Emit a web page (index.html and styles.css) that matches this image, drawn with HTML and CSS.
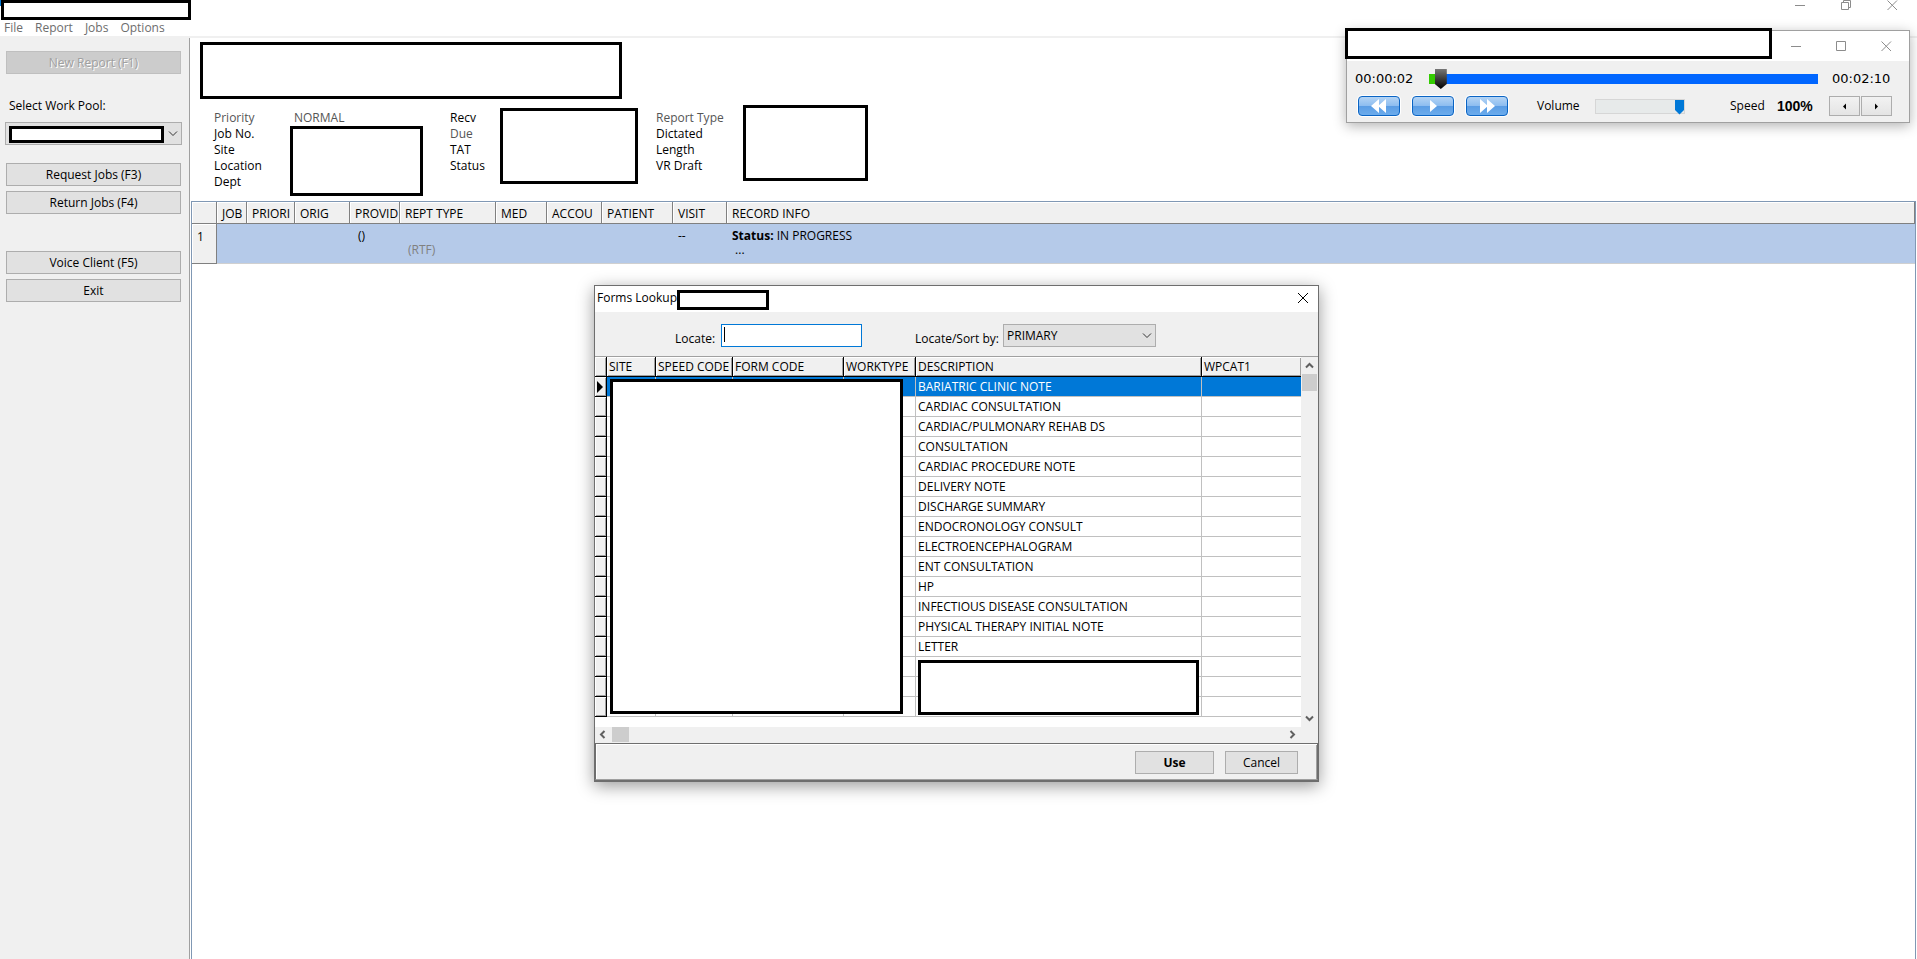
FILE: index.html
```html
<!DOCTYPE html>
<html lang="en">
<head>
<meta charset="utf-8">
<title>Transcription Client</title>
<link rel="stylesheet" href="styles.css">
</head>
<body>
<div class="app">
  <header class="titlebar">
    <div class="title-left">
      <div class="masked app-title"></div>
      <nav class="menu">
        <button type="button">File</button>
        <button type="button">Report</button>
        <button type="button">Jobs</button>
        <button type="button">Options</button>
      </nav>
    </div>
    <div class="win-controls main-controls">
      <button type="button" aria-label="Minimize"><svg width="11" height="11" viewBox="0 0 11 11"><path d="M0 5.5h10"/></svg></button>
      <button type="button" aria-label="Restore"><svg width="11" height="11" viewBox="0 0 11 11"><path d="M.5 2.5h7v7h-7zM2.5 2.5v-2h7v7h-2"/></svg></button>
      <button type="button" aria-label="Close"><svg width="11" height="11" viewBox="0 0 11 11"><path d="M.5.5l9.5 9.5M10 .5L.5 10"/></svg></button>
    </div>
  </header>

  <div class="workspace">
    <aside class="sidebar">
      <button type="button" class="btn new-report" disabled>New Report (F1)</button>
      <label class="pool-label" for="pool">Select Work Pool:</label>
      <div class="pool-wrap">
        <select id="pool" class="combo"><option></option></select>
        <div class="masked pool-mask"></div>
      </div>
      <button type="button" class="btn">Request Jobs (F3)</button>
      <button type="button" class="btn return-jobs">Return Jobs (F4)</button>
      <button type="button" class="btn">Voice Client (F5)</button>
      <button type="button" class="btn">Exit</button>
    </aside>

    <main class="main">
      <section class="job-head">
        <div class="masked banner"></div>
        <div class="fields">
          <ul class="labels first">
            <li class="dim">Priority</li><li>Job No.</li><li>Site</li><li>Location</li><li>Dept</li>
          </ul>
          <div class="first-values"><span class="dim">NORMAL</span><div class="masked job-mask"></div></div>
          <ul class="labels second">
            <li>Recv</li><li class="dim">Due</li><li>TAT</li><li>Status</li>
          </ul>
          <div class="masked recv-mask"></div>
          <ul class="labels third">
            <li class="dim">Report Type</li><li>Dictated</li><li>Length</li><li>VR Draft</li>
          </ul>
          <div class="masked type-mask"></div>
        </div>
      </section>
      <section class="jobs">
        <table class="jobs-table">
          <colgroup><col class="j0"><col class="j1"><col class="j2"><col class="j3"><col class="j4"><col class="j5"><col class="j6"><col class="j7"><col class="j8"><col class="j9"><col></colgroup>
          <thead><tr><th></th><th>JOB</th><th>PRIORI</th><th>ORIG</th><th>PROVID</th><th>REPT TYPE</th><th>MED</th><th>ACCOU</th><th>PATIENT</th><th>VISIT</th><th>RECORD INFO</th></tr></thead>
          <tbody><tr><th>1</th><td></td><td></td><td></td><td class="provider">()</td><td class="rtf"><br>(RTF)</td><td></td><td></td><td></td><td>--</td><td><b>Status:</b> IN PROGRESS<br>&nbsp;...</td></tr></tbody>
        </table>
      </section>
    </main>
  </div>

  <section class="player" aria-label="Player">
    <div class="masked player-mask"></div>
    <div class="win-controls player-controls">
      <button type="button" aria-label="Minimize"><svg width="11" height="11" viewBox="0 0 11 11"><path d="M0 5.5h10"/></svg></button>
      <button type="button" aria-label="Maximize"><svg width="11" height="11" viewBox="0 0 11 11"><path d="M.5.5h9v9h-9z"/></svg></button>
      <button type="button" aria-label="Close"><svg width="11" height="11" viewBox="0 0 11 11"><path d="M.5.5l9.5 9.5M10 .5L.5 10"/></svg></button>
    </div>
    <div class="player-body">
      <div class="seek-row">
        <span class="time">00:00:02</span>
        <input class="seek" type="range" min="0" max="130" value="2" aria-label="Position">
        <span class="time">00:02:10</span>
      </div>
      <div class="control-row">
        <button type="button" class="media" aria-label="Rewind"><svg width="16" height="14" viewBox="0 0 16 14"><path d="M8 0v14L0 7zM15 0v14L7 7z"/></svg></button>
        <button type="button" class="media" aria-label="Play"><svg width="16" height="14" viewBox="0 0 16 14"><path d="M5 1v12l7-6z"/></svg></button>
        <button type="button" class="media" aria-label="Fast forward"><svg width="16" height="14" viewBox="0 0 16 14"><path d="M1 0v14l8-7zM8 0v14l8-7z"/></svg></button>
        <label class="volume-label" for="volume">Volume</label>
        <input class="volume" id="volume" type="range" min="0" max="100" value="100">
        <span class="speed-label">Speed</span>
        <b class="speed">100%</b>
        <button type="button" class="step" aria-label="Slower"><svg width="5" height="7" viewBox="0 0 5 7"><path d="M4 .5v6L1 3.5z"/></svg></button>
        <button type="button" class="step" aria-label="Faster"><svg width="5" height="7" viewBox="0 0 5 7"><path d="M1 .5v6l3-3z"/></svg></button>
      </div>
    </div>
  </section>

  <section class="dialog" role="dialog" aria-label="Forms Lookup">
    <div class="dialog-title">
      <span>Forms Lookup</span>
      <div class="masked title-mask"></div>
      <button type="button" class="dialog-close" aria-label="Close"><svg width="12" height="12" viewBox="0 0 12 12"><path d="M1 1l10 10M11 1L1 11"/></svg></button>
    </div>
    <div class="toolbar">
      <label class="locate-label" for="locate">Locate:</label>
      <input class="locate" id="locate" type="text">
      <label class="sort-label" for="sort">Locate/Sort by:</label>
      <select class="combo sort" id="sort"><option>PRIMARY</option></select>
    </div>
    <div class="grid-area">
      <div class="grid-view">
        <table class="forms">
          <colgroup><col class="f0"><col class="f1"><col class="f2"><col class="f3"><col class="f4"><col class="f5"><col></colgroup>
          <thead><tr><th></th><th>SITE</th><th>SPEED CODE</th><th>FORM CODE</th><th>WORKTYPE</th><th>DESCRIPTION</th><th>WPCAT1</th></tr></thead>
          <tbody>
            <tr class="selected"><th><svg width="6" height="12" viewBox="0 0 6 12"><path d="M0 0v12l6-6z"/></svg></th><td></td><td></td><td></td><td></td><td>BARIATRIC CLINIC NOTE</td><td></td></tr>
            <tr><th></th><td></td><td></td><td></td><td></td><td>CARDIAC CONSULTATION</td><td></td></tr>
            <tr><th></th><td></td><td></td><td></td><td></td><td>CARDIAC/PULMONARY REHAB DS</td><td></td></tr>
            <tr><th></th><td></td><td></td><td></td><td></td><td>CONSULTATION</td><td></td></tr>
            <tr><th></th><td></td><td></td><td></td><td></td><td>CARDIAC PROCEDURE NOTE</td><td></td></tr>
            <tr><th></th><td></td><td></td><td></td><td></td><td>DELIVERY NOTE</td><td></td></tr>
            <tr><th></th><td></td><td></td><td></td><td></td><td>DISCHARGE SUMMARY</td><td></td></tr>
            <tr><th></th><td></td><td></td><td></td><td></td><td>ENDOCRONOLOGY CONSULT</td><td></td></tr>
            <tr><th></th><td></td><td></td><td></td><td></td><td>ELECTROENCEPHALOGRAM</td><td></td></tr>
            <tr><th></th><td></td><td></td><td></td><td></td><td>ENT CONSULTATION</td><td></td></tr>
            <tr><th></th><td></td><td></td><td></td><td></td><td>HP</td><td></td></tr>
            <tr><th></th><td></td><td></td><td></td><td></td><td>INFECTIOUS DISEASE CONSULTATION</td><td></td></tr>
            <tr><th></th><td></td><td></td><td></td><td></td><td>PHYSICAL THERAPY INITIAL NOTE</td><td></td></tr>
            <tr><th></th><td></td><td></td><td></td><td></td><td>LETTER</td><td></td></tr>
            <tr><th></th><td></td><td></td><td></td><td></td><td></td><td></td></tr>
            <tr><th></th><td></td><td></td><td></td><td></td><td></td><td></td></tr>
            <tr><th></th><td></td><td></td><td></td><td></td><td></td><td></td></tr>
          </tbody>
        </table>
        <div class="masked codes-mask"></div>
        <div class="masked desc-mask"></div>
      </div>
      <div class="vscroll">
        <svg width="9" height="7" viewBox="0 0 9 7"><path d="M1 5.5l3.500-3.500L8 5.5"/></svg>
        <div class="vthumb"></div>
        <svg class="down" width="9" height="7" viewBox="0 0 9 7"><path d="M1 1.5L4.5 5L8 1.5"/></svg>
      </div>
    </div>
    <div class="hscroll">
      <svg width="7" height="9" viewBox="0 0 7 9"><path d="M5.5 1L2 4.5L5.5 8"/></svg>
      <div class="hthumb"></div>
      <svg class="right" width="7" height="9" viewBox="0 0 7 9"><path d="M1.5 1L5 4.5L1.5 8"/></svg>
    </div>
    <div class="dialog-foot">
      <button type="button" class="btn use">Use</button>
      <button type="button" class="btn cancel">Cancel</button>
    </div>
  </section>
</div>
</body>
</html>
```
FILE: styles.css
```css
* { box-sizing: border-box; }

body {
  margin: 0;
  background: #fff;
  color: #000;
  font: 12px/16px "Open Sans", "Noto Sans", sans-serif;
}

button, input, select {
  margin: 0;
  color: inherit;
  font: inherit;
}

svg { display: block; }

.app {
  position: relative;
  display: flex;
  flex-direction: column;
  min-height: 100vh;
  overflow: hidden;
}

.masked {
  border: 3px solid #000;
  background: #fff;
}

/* Main window title and menu */
.titlebar {
  display: flex;
  justify-content: space-between;
  border-bottom: 2px solid #f0f0f0;
}

.title-left {
  padding-left: 1px;
  background: linear-gradient(#0078d7, #0078d7) 0 0 / 1px 6px no-repeat;
}
.app-title { width: 190px; height: 20px; }

.menu {
  display: flex;
  gap: 12px;
  padding-left: 3px;
  color: #6d6d6d;
}
.menu button {
  padding: 0;
  border: 0;
  background: none;
}

.win-controls { display: flex; }
.win-controls button {
  padding: 0;
  border: 0;
  background: none;
}
.win-controls svg {
  fill: none;
  stroke: #8c8c8c;
}
.main-controls {
  align-items: flex-start;
  gap: 35px;
  padding-right: 19px;
}

.workspace { display: flex; flex: 1; }

/* Sidebar */
.sidebar {
  display: flex;
  flex: none;
  flex-direction: column;
  width: 191px;
  padding: 13px 8px 0 6px;
  border-right: 1px solid #fff;
  background: #f0f0f0;
  box-shadow: inset -1px 0 #a0a0a0;
}
.btn {
  height: 23px;
  margin-bottom: 5px;
  padding: 0;
  border: 1px solid #adadad;
  background: #e1e1e1;
}
.sidebar .btn { margin-right: 1px; }
.btn:disabled {
  border-color: #bfbfbf;
  background: #ccc;
  color: #a0a0a0;
  text-shadow: 1px 1px #fff;
}
.new-report { margin-bottom: 24px; }
.pool-label { padding-left: 3px; }
.pool-wrap {
  position: relative;
  margin: 8px 0 18px -1px;
}
.combo {
  appearance: none;
  height: 23px;
  padding: 0 3px;
  border: 1px solid #adadad;
  border-radius: 0;
  background: #e1e1e1 url("data:image/svg+xml,%3Csvg xmlns='http://www.w3.org/2000/svg' width='10' height='6'%3E%3Cpath d='M1 .5l4 4 4-4' fill='none' stroke='%23333'/%3E%3C/svg%3E") right 3px center no-repeat;
}
.pool-wrap .combo { display: block; width: 100%; }
.pool-mask {
  position: absolute;
  top: 4px;
  right: 18px;
  left: 4px;
  height: 17px;
}
.sidebar .return-jobs { margin-bottom: 37px; }

/* Job header */
.main {
  display: flex;
  flex: 1;
  flex-direction: column;
  min-width: 0;
}
.job-head { padding: 4px 9px 5px; }
.banner { width: 422px; height: 57px; }
.fields {
  display: flex;
  align-items: flex-start;
  padding: 6px 0 0 14px;
}
.dim { color: #555; }
.labels {
  margin: 0;
  padding: 5px 0 0;
  list-style: none;
}
.first { width: 76px; }
.second { width: 50px; }
.third { width: 87px; }
.first-values { width: 160px; padding-top: 5px; }
.first-values .dim { display: block; padding-left: 4px; }
.job-mask { width: 133px; height: 70px; }
.recv-mask {
  width: 138px;
  height: 76px;
  margin: 3px 18px 0 0;
}
.type-mask { width: 125px; height: 76px; }

/* Job list */
.jobs {
  flex: 1;
  margin-right: 1px;
  border: 1px solid #8098b4;
  border-bottom: 0;
}
.jobs-table {
  width: 100%;
  border-spacing: 0;
  table-layout: fixed;
}
.j0 { width: 25px; }
.j1 { width: 30px; }
.j2 { width: 48px; }
.j3 { width: 55px; }
.j4 { width: 50px; }
.j5 { width: 96px; }
.j6 { width: 51px; }
.j7 { width: 55px; }
.j8 { width: 71px; }
.j9 { width: 54px; }
.jobs-table th {
  padding: 0 0 0 5px;
  border-right: 1px solid #808080;
  border-bottom: 1px solid #808080;
  background: #f0f0f0;
  box-shadow: inset 1px 1px #fff;
  font-weight: 400;
  text-align: left;
  white-space: nowrap;
}
.jobs-table thead th { height: 22px; padding-top: 3px; }
.jobs-table tbody tr { height: 40px; }
.jobs-table tbody th { padding-top: 5px; vertical-align: top; }
.jobs-table td {
  padding: 5px 0 0 5px;
  border-bottom: 1px solid #d0d0d0;
  background: #b5cae9;
  line-height: 14px;
  vertical-align: top;
}
.jobs-table .provider { padding-left: 8px; }
.jobs-table .rtf { padding-left: 8px; color: #808080; }

/* Player window */
.player {
  position: absolute;
  top: 30px;
  right: 7px;
  width: 564px;
  border: 1px solid #a0a0a0;
  background: #fff;
  box-shadow: 0 3px 12px rgba(0, 0, 0, .3);
}
.player-mask {
  position: absolute;
  top: -3px;
  left: -2px;
  width: 427px;
  height: 31px;
}
.player-controls {
  align-items: center;
  justify-content: flex-end;
  gap: 34px;
  height: 30px;
  padding-right: 17px;
}
.player-body {
  padding: 8px 17px 6px 8px;
  background: #f0f0f0;
}
.seek-row, .control-row { display: flex; align-items: center; }
.time {
  width: 60px;
  font: 13px/20px "DejaVu Sans", sans-serif;
  white-space: nowrap;
}
.seek-row { gap: 14px; }
.seek, .volume {
  appearance: none;
  margin: 0;
  background: none;
}
.seek { flex: 1; min-width: 0; height: 20px; }
.seek::-webkit-slider-runnable-track {
  height: 10px;
  background: linear-gradient(90deg, #3c0 8px, #06f 8px);
}
.seek::-webkit-slider-thumb {
  appearance: none;
  width: 12px;
  height: 20px;
  margin-top: -5px;
  background: linear-gradient(#777, #000);
  clip-path: polygon(0 0, 100% 0, 100% 75%, 50% 100%, 0 75%);
}
.control-row { padding: 7px 0 0 3px; }
.media {
  display: grid;
  flex: none;
  place-items: center;
  width: 42px;
  height: 20px;
  margin-right: 12px;
  padding: 0;
  border: 1px solid #0a64c4;
  border-radius: 4px;
  background: linear-gradient(#b4d4f4, #8cbcf0 50%, #5a9ce4 50%, #6cacec);
  box-shadow: 0 0 0 1px #fff;
}
.media svg { fill: #fff; }
.volume-label { width: 75px; padding-left: 17px; }
.volume { width: 90px; height: 16px; }
.volume::-webkit-slider-runnable-track {
  height: 15px;
  border: 1px solid #d6d6d6;
  background: #e7eaea;
}
.volume::-webkit-slider-thumb {
  appearance: none;
  width: 9px;
  height: 15px;
  background: #0078d7;
  clip-path: polygon(0 0, 100% 0, 100% 70%, 50% 100%, 0 70%);
}
.speed-label { width: 47px; margin-left: 45px; }
.speed { flex: 1; font: bold 14px/16px "Liberation Sans", Arial, sans-serif; }
.step {
  display: grid;
  place-items: center;
  width: 31px;
  height: 20px;
  margin-left: 1px;
  padding: 0;
  border: 1px solid #adadad;
  background: linear-gradient(#f2f2f2, #e4e4e4);
}

/* Forms Lookup window */
.dialog {
  position: absolute;
  top: 285px;
  left: 594px;
  width: 725px;
  border: 1px solid #6e6e6e;
  border-bottom-width: 2px;
  background: #f0f0f0;
  box-shadow: 0 4px 16px rgba(0, 0, 0, .4);
}
.dialog-title {
  display: flex;
  align-items: center;
  height: 26px;
  padding: 0 9px 2px 2px;
  background: #fff;
}
.dialog-title span { flex: none; white-space: nowrap; }
.title-mask { width: 92px; height: 20px; margin-top: 4px; }
.dialog-close {
  margin-left: auto;
  padding: 0;
  border: 0;
  background: none;
}
.dialog-close svg { fill: none; stroke: #000; }
.toolbar {
  display: flex;
  align-items: flex-start;
  height: 45px;
  padding-top: 12px;
  border-bottom: 1px solid #a0a0a0;
}
.toolbar label { padding-top: 7px; }
.locate-label { width: 126px; padding-left: 80px; }
.locate {
  width: 141px;
  height: 23px;
  border: 1px solid #0078d7;
  background: linear-gradient(#000, #000) 2px 2px / 1px 15px no-repeat #fff;
}
.sort-label { width: 141px; padding-left: 53px; white-space: nowrap; }
.sort { width: 153px; }

.grid-area { display: flex; height: 370px; }
.grid-view {
  position: relative;
  flex: 1;
  background: #fff;
}
.forms {
  width: 100%;
  border-spacing: 0;
  table-layout: fixed;
}
.f0 { width: 12px; }
.f1 { width: 49px; }
.f2 { width: 77px; }
.f3 { width: 111px; }
.f4 { width: 72px; }
.f5 { width: 286px; }
.forms tr { height: 20px; }
.forms th {
  padding: 0 0 0 2px;
  border-right: 1px solid #000;
  border-bottom: 1px solid #000;
  background: #f0f0f0;
  box-shadow: inset 1px 1px #fff, inset -1px -1px #a0a0a0;
  font-weight: 400;
  line-height: 18px;
  text-align: left;
  white-space: nowrap;
}
.forms thead th:last-child { border-right: 0; }
.forms td {
  padding: 0 0 0 2px;
  border-right: 1px solid #c0c0c0;
  border-bottom: 1px solid #c0c0c0;
  line-height: 18px;
  white-space: nowrap;
}
.forms td:last-child { border-right: 0; }
.selected td { background: #0078d7; color: #fff; }
.codes-mask {
  position: absolute;
  top: 22px;
  left: 15px;
  width: 293px;
  height: 335px;
}
.desc-mask {
  position: absolute;
  top: 303px;
  left: 323px;
  width: 281px;
  height: 55px;
}
.vscroll {
  display: flex;
  flex: none;
  flex-direction: column;
  align-items: center;
  width: 17px;
  padding: 5px 1px;
}
.vscroll svg, .hscroll svg { fill: none; stroke: #606060; stroke-width: 2; }
.vthumb {
  width: 15px;
  height: 17px;
  margin-top: 5px;
  background: #cdcdcd;
}
.down { margin-top: auto; }
.hscroll {
  display: flex;
  align-items: center;
  height: 16px;
  padding: 0 22px 1px 4px;
}
.hthumb {
  width: 17px;
  height: 15px;
  margin-left: 6px;
  background: #cdcdcd;
}
.right { margin-left: auto; }
.dialog-foot {
  display: flex;
  justify-content: flex-end;
  gap: 11px;
  padding: 7px 19px 5px 0;
  border: 1px solid #6e6e6e;
  border-bottom-color: #a0a0a0;
  box-shadow: inset 1px 1px #fff, inset -1px 0 #a0a0a0;
}
.dialog-foot .btn { margin: 0; }
.use { width: 79px; font-weight: 700; }
.cancel { width: 73px; }
```
